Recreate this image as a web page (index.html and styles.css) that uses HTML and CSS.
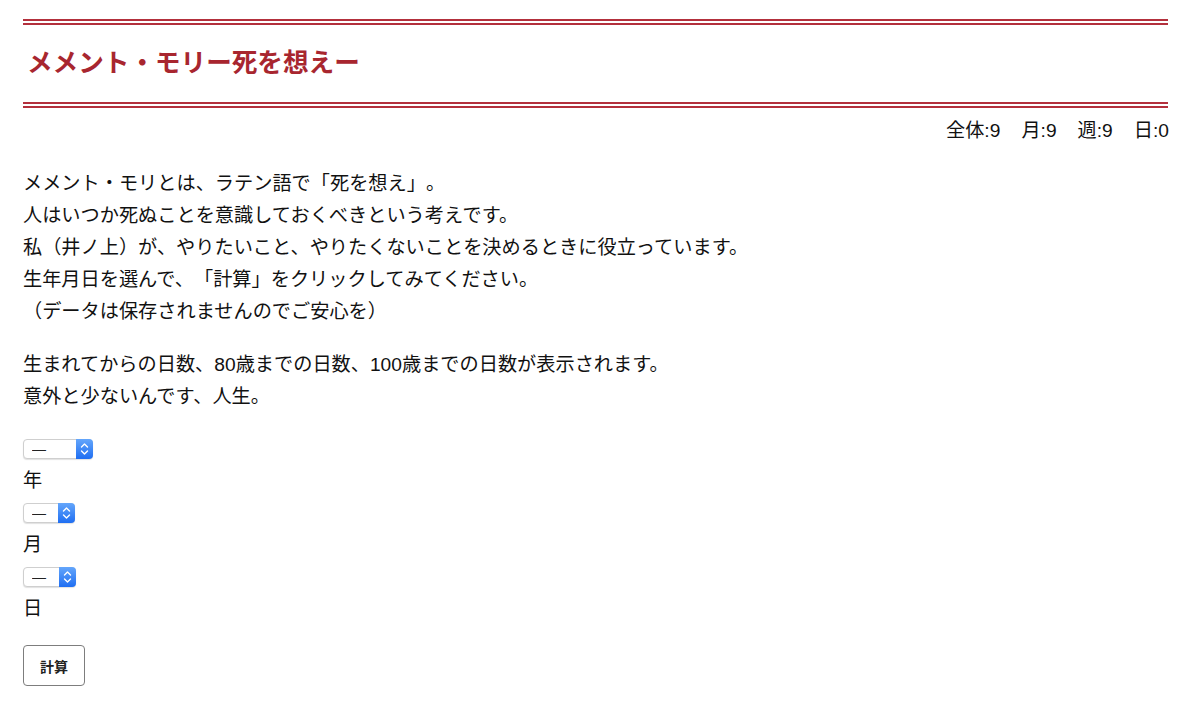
FILE: index.html
```html
<!DOCTYPE html>
<html lang="ja">
<head>
    <meta charset="UTF-8">
    <meta name="viewport" content="width=device-width, initial-scale=1.0">
    <title>メメント・モリー死を想えー</title>
    <link rel="stylesheet" href="styles.css">
</head>
<body>
<div class="page">

    <header>
        <h1>メメント・モリー死を想えー</h1>
    </header>

    <div class="counter">
        <span>全体:9</span>
        <span>月:9</span>
        <span>週:9</span>
        <span>日:0</span>
    </div>

    <main>
        <p>
            メメント・モリとは、ラテン語で「死を想え」。<br>
            人はいつか死ぬことを意識しておくべきという考えです。<br>
            私（井ノ上）が、やりたいこと、やりたくないことを決めるときに役立っています。<br>
            生年月日を選んで、「計算」をクリックしてみてください。<br>
            （データは保存されませんのでご安心を）
        </p>
        <p>
            生まれてからの日数、80歳までの日数、100歳までの日数が表示されます。<br>
            意外と少ないんです、人生。
        </p>

        <form class="birth" onsubmit="return false">
            <div class="field">
                <span class="picker picker-year">
                    <select name="year"><option>—</option></select>
                    <span class="arrows">
                        <svg width="9" height="14" viewBox="0 0 9 14"><path d="M1.5 5 L4.5 2 L7.5 5 M1.5 9 L4.5 12 L7.5 9" fill="none" stroke="#fff" stroke-width="1.4" stroke-linecap="round" stroke-linejoin="round"/></svg>
                    </span>
                </span>
            </div>
            <div class="label">年</div>

            <div class="field">
                <span class="picker">
                    <select name="month"><option>—</option></select>
                    <span class="arrows">
                        <svg width="9" height="14" viewBox="0 0 9 14"><path d="M1.5 5 L4.5 2 L7.5 5 M1.5 9 L4.5 12 L7.5 9" fill="none" stroke="#fff" stroke-width="1.4" stroke-linecap="round" stroke-linejoin="round"/></svg>
                    </span>
                </span>
            </div>
            <div class="label">月</div>

            <div class="field">
                <span class="picker picker-day">
                    <select name="day"><option>—</option></select>
                    <span class="arrows">
                        <svg width="9" height="14" viewBox="0 0 9 14"><path d="M1.5 5 L4.5 2 L7.5 5 M1.5 9 L4.5 12 L7.5 9" fill="none" stroke="#fff" stroke-width="1.4" stroke-linecap="round" stroke-linejoin="round"/></svg>
                    </span>
                </span>
            </div>
            <div class="label">日</div>

            <button type="submit">計算</button>
        </form>
    </main>

</div>
</body>
</html>
```

FILE: styles.css
```css
body {
    margin: 0;
    padding: 0;
    background-color: #fff;
    color: #111;
    font-family: 'Liberation Sans', 'Noto Sans CJK JP', sans-serif;
    font-size: 19.2px;
    line-height: 32px;
    text-spacing-trim: space-all;
}

.page {
    padding: 19px 30px 0 23px;
}

header {
    border-top: 6px double #b3303c;
    border-bottom: 6px double #b3303c;
}

header h1 {
    margin: 0;
    padding: 24px 4px;
    font-size: 25.6px;
    line-height: 29px;
    font-weight: bold;
    color: #a8262f;
}

.counter {
    display: flex;
    justify-content: flex-end;
    gap: 21px;
    margin-right: -1px;
    padding-top: 7px;
}

main p {
    margin: 21px 0 20px;
}

.birth {
    margin-top: 20px;
}

.field {
    display: flex;
    align-items: center;
    height: 32px;
}

.picker {
    position: relative;
    display: block;
    width: 52px;
    height: 20px;
}

.picker-year {
    width: 70px;
}

.picker-day {
    width: 53px;
}

.picker select {
    -webkit-appearance: none;
    appearance: none;
    display: block;
    box-sizing: border-box;
    width: 100%;
    height: 20px;
    margin: 0;
    padding: 0 0 0 8px;
    border: 1px solid #cfcfcf;
    border-radius: 4px;
    background-color: #fff;
    box-shadow: 0 1px 1px rgba(0, 0, 0, 0.12);
    font-family: 'Liberation Sans', sans-serif;
    font-size: 14px;
    line-height: 18px;
    color: #222;
}

.picker .arrows {
    position: absolute;
    top: 0;
    right: 0;
    width: 17px;
    height: 20px;
    display: flex;
    align-items: center;
    justify-content: center;
    background: linear-gradient(#64a6fb, #1f6ef2);
    border-radius: 0 4px 4px 0;
    pointer-events: none;
}

.label {
    height: 32px;
}

.birth button {
    display: block;
    margin-top: 20px;
    width: 62px;
    height: 41px;
    padding: 0;
    background-color: #fff;
    border: 1px solid #7d7d7d;
    border-radius: 4px;
    font-family: 'Noto Sans CJK JP', sans-serif;
    font-size: 14px;
    font-weight: bold;
    color: #222;
    cursor: pointer;
}
```
